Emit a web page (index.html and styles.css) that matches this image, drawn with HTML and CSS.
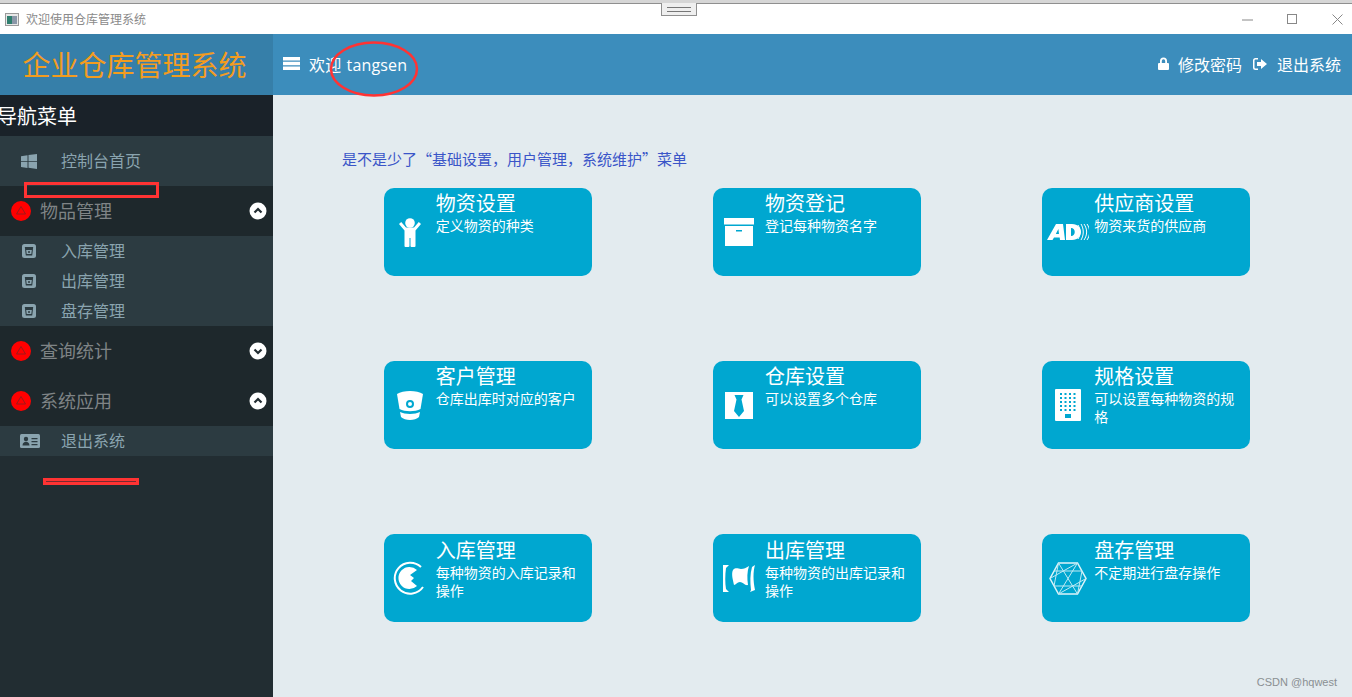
FILE: index.html
```html
<!DOCTYPE html>
<html lang="zh-CN">
<head>
<meta charset="utf-8">
<title>欢迎使用仓库管理系统</title>
<link rel="stylesheet" href="styles.css">
</head>
<body>
<div class="window">
  <div class="topstrip"></div>
  <div class="grip"></div>
  <div class="titlebar">
    <svg class="appicon" width="14" height="13" viewBox="0 0 14 13"><rect x=".5" y=".5" width="13" height="12" fill="#e8e8e8" stroke="#9a9a9a"/><rect x="2" y="3" width="5" height="8" fill="#2f7f6f"/><rect x="7" y="3" width="5" height="8" fill="#8a97a8"/></svg>
    <span class="wintitle">欢迎使用仓库管理系统</span>
    <div class="wincontrols">
      <svg width="11" height="11" viewBox="0 0 11 11"><path d="M0 6h11" stroke="#888" fill="none"/></svg>
      <svg width="11" height="11" viewBox="0 0 11 11"><rect x=".5" y=".5" width="9" height="9" stroke="#888" fill="none"/></svg>
      <svg width="11" height="11" viewBox="0 0 11 11"><path d="M.5.5l10 10M10.500.5l-10 10" stroke="#888" fill="none"/></svg>
    </div>
  </div>
  <div class="app">
    <header class="header">
      <div class="logo">企业仓库管理系统</div>
      <div class="navbar">
        <svg class="burger" width="17" height="13" viewBox="0 0 17 13"><path d="M0 0h17v3.500H0zM0 4.750h17v3.500H0zM0 9.500h17V13H0z" fill="#fff"/></svg>
        <span class="welcome">欢迎 tangsen</span>
        <div class="navlinks">
          <svg width="11" height="13" viewBox="0 0 11 13"><path d="M2 6V4a3.500 3.500 0 0 1 7 0v2h1a1 1 0 0 1 1 1v5a1 1 0 0 1-1 1H1a1 1 0 0 1-1-1V7a1 1 0 0 1 1-1zm1.800 0h3.400V4a1.700 1.700 0 0 0-3.400 0z" fill="#fff"/></svg>
          <a class="navlink">修改密码</a>
          <svg class="signout" width="14" height="12" viewBox="0 0 14 12"><path d="M5 0v1.500H2.500a1 1 0 0 0-1 1v7a1 1 0 0 0 1 1H5V12H2.500A2.500 2.500 0 0 1 0 9.500v-7A2.500 2.500 0 0 1 2.500 0z" fill="#fff"/><path d="M8 1l6 5-6 5V8H4V4h4z" fill="#fff"/></svg>
          <a class="navlink">退出系统</a>
        </div>
      </div>
    </header>
    <div class="body">
      <aside class="sidebar">
        <div class="sidetitle">导航菜单</div>
        <a class="home">
          <svg class="itemicon" width="16" height="15" viewBox="0 0 16 15"><path d="M0 2.200l6.500-1v6H0zM7.500 1L16 0v7.200H7.500zM0 8h6.500v6L0 13zM7.500 8H16v7l-8.500-1.200z" fill="#8aa4af"/></svg>
          <span class="itemlabel">控制台首页</span>
        </a>
        <div class="group">
          <svg class="alert" width="20" height="20" viewBox="0 0 20 20"><circle cx="10" cy="10" r="10" fill="#f00"/><path d="M10 5.500l4.500 7.500h-9z" fill="none" stroke="#9c1a1a" stroke-width="1"/></svg>
          <span class="grouplabel">物品管理</span>
          <svg class="chev" width="18" height="18" viewBox="0 0 18 18"><circle cx="9" cy="9" r="8.500" fill="#fff"/><path d="M5.500 10.500L9 7l3.500 3.500" fill="none" stroke="#222d32" stroke-width="2.200"/></svg>
        </div>
        <ul class="submenu">
          <li class="subitem"><svg class="itemicon" width="14" height="14" viewBox="0 0 14 14"><rect width="14" height="14" rx="2.500" fill="#8aa4af"/><path d="M2.800 3h8.400l-1 8.500H3.800z" fill="#2c3b41"/><path d="M4.200 6h5.600l-.5 4H4.700z" fill="#8aa4af"/><circle cx="7" cy="8" r="1" fill="#2c3b41"/></svg><span class="itemlabel">入库管理</span></li>
          <li class="subitem"><svg class="itemicon" width="14" height="14" viewBox="0 0 14 14"><rect width="14" height="14" rx="2.500" fill="#8aa4af"/><path d="M2.800 3h8.400l-1 8.500H3.800z" fill="#2c3b41"/><path d="M4.200 6h5.600l-.5 4H4.700z" fill="#8aa4af"/><circle cx="7" cy="8" r="1" fill="#2c3b41"/></svg><span class="itemlabel">出库管理</span></li>
          <li class="subitem"><svg class="itemicon" width="14" height="14" viewBox="0 0 14 14"><rect width="14" height="14" rx="2.500" fill="#8aa4af"/><path d="M2.800 3h8.400l-1 8.500H3.800z" fill="#2c3b41"/><path d="M4.200 6h5.600l-.5 4H4.700z" fill="#8aa4af"/><circle cx="7" cy="8" r="1" fill="#2c3b41"/></svg><span class="itemlabel">盘存管理</span></li>
        </ul>
        <div class="group">
          <svg class="alert" width="20" height="20" viewBox="0 0 20 20"><circle cx="10" cy="10" r="10" fill="#f00"/><path d="M10 5.500l4.500 7.500h-9z" fill="none" stroke="#9c1a1a" stroke-width="1"/></svg>
          <span class="grouplabel">查询统计</span>
          <svg class="chev" width="18" height="18" viewBox="0 0 18 18"><circle cx="9" cy="9" r="8.500" fill="#fff"/><path d="M5.500 7.500L9 11l3.500-3.500" fill="none" stroke="#222d32" stroke-width="2.200"/></svg>
        </div>
        <div class="group">
          <svg class="alert" width="20" height="20" viewBox="0 0 20 20"><circle cx="10" cy="10" r="10" fill="#f00"/><path d="M10 5.500l4.500 7.500h-9z" fill="none" stroke="#9c1a1a" stroke-width="1"/></svg>
          <span class="grouplabel">系统应用</span>
          <svg class="chev" width="18" height="18" viewBox="0 0 18 18"><circle cx="9" cy="9" r="8.500" fill="#fff"/><path d="M5.500 10.500L9 7l3.500 3.500" fill="none" stroke="#222d32" stroke-width="2.200"/></svg>
        </div>
        <ul class="submenu">
          <li class="subitem subitem-wide"><svg class="itemicon" width="20" height="14" viewBox="0 0 20 14"><rect width="20" height="14" rx="1.500" fill="#8aa4af"/><circle cx="6" cy="5" r="2.200" fill="#2c3b41"/><path d="M2.500 11.500c0-5 7-5 7 0zM11.500 4h6v1.300h-6zM11.500 7h6v1.300h-6zM11.500 10h6v1.300h-6z" fill="#2c3b41"/></svg><span class="itemlabel">退出系统</span></li>
        </ul>
      </aside>
      <main class="content">
        <p class="note">是不是少了“基础设置，用户管理，系统维护”菜单</p>
        <div class="cards">
          <div class="card">
            <div class="cardicon"><svg width="22" height="29" viewBox="0 0 22 29"><circle cx="11" cy="5" r="4.800" fill="#fff"/><path d="M0 6l2.200-2 4.800 5.500h8L19.800 4 22 6l-5.500 6.500V28a1 1 0 0 1-1 1h-3a1 1 0 0 1-1-1V20h-1v8a1 1 0 0 1-1 1h-3a1 1 0 0 1-1-1V12.500z" fill="#fff"/></svg></div>
            <div class="cardtext"><h3>物资设置</h3><p>定义物资的种类</p></div>
          </div>
          <div class="card">
            <div class="cardicon"><svg width="30" height="28" viewBox="0 0 30 28"><path d="M0 0h30v6.500H0zM1 8h28v20H1z" fill="#fff"/><rect x="12" y="12" width="6" height="1.500" fill="#00a7d0"/></svg></div>
            <div class="cardtext"><h3>物资登记</h3><p>登记每种物资名字</p></div>
          </div>
          <div class="card">
            <div class="cardicon"><svg width="42" height="16" viewBox="0 0 42 16"><path d="M0 16L9 0h7l2 16h-5l-.3-2.500H7L5.500 16zM8.800 10H12l-.6-5zM19 0h6c12 0 12 16 0 16h-6zM24 4v8c5 0 5-8 0-8z" fill="#fff"/><path d="M31 1c2.500 4 2.500 10 0 14M34 0c3 5 3 11 0 16M37 0c3.500 5 3.500 11 0 16M40 0c3.500 5 3.500 11 0 16" stroke="#fff" fill="none" stroke-width="1"/></svg></div>
            <div class="cardtext"><h3>供应商设置</h3><p>物资来货的供应商</p></div>
          </div>
          <div class="card">
            <div class="cardicon"><svg width="26" height="29" viewBox="0 0 26 29"><path d="M0 3C6-1 20-1 26 3l-2.500 15C18 21 8 21 2.500 18z" fill="#fff"/><circle cx="13" cy="13" r="3" fill="#fff" stroke="#00a7d0" stroke-width="2"/><path d="M3 21c5 2.500 15 2.500 20 0l-1 5c-4 4-14 4-18 0z" fill="#fff"/></svg></div>
            <div class="cardtext"><h3>客户管理</h3><p>仓库出库时对应的客户</p></div>
          </div>
          <div class="card">
            <div class="cardicon"><svg width="28" height="27" viewBox="0 0 28 27"><rect width="28" height="27" fill="#fff"/><path d="M9.500 3h9L16.500 7.500 19 19l-5 6-5-6 2.500-11.500z" fill="#00a7d0"/></svg></div>
            <div class="cardtext"><h3>仓库设置</h3><p>可以设置多个仓库</p></div>
          </div>
          <div class="card">
            <div class="cardicon"><svg width="26" height="32" viewBox="0 0 26 32"><rect width="26" height="32" rx="1" fill="#fff"/><path d="M5 5h16M5 9h16M5 13h16M5 17h16M5 21h16" stroke="#00a7d0" stroke-width="2" stroke-dasharray="2 2.500" fill="none"/><rect x="10" y="25" width="6" height="4" fill="#00a7d0"/></svg></div>
            <div class="cardtext"><h3>规格设置</h3><p>可以设置每种物资的规格</p></div>
          </div>
          <div class="card">
            <div class="cardicon"><svg width="33" height="34" viewBox="0 0 33 34"><path d="M28 6A15.500 15.500 0 1 0 30 26" fill="none" stroke="#fff" stroke-width="2"/><path d="M24 9A11 11 0 1 0 24 25l-6-5 3-3-4-3z" fill="#fff"/></svg></div>
            <div class="cardtext"><h3>入库管理</h3><p>每种物资的入库记录和操作</p></div>
          </div>
          <div class="card">
            <div class="cardicon"><svg width="34" height="27" viewBox="0 0 34 27"><path d="M1 0h6L4 3C3 10 3 18 4 24l3 3H1zM33 0c-2 6-2 16 0 25l-5 2 1-2c-1-8-1-16 1-23z" fill="#fff"/><path d="M11 5c3-3 5-1 8-1 3 0 5-1 8-3-2 6-2 12-1 19-3 1-5-3-8-3-3 0-4 3-6 3-1-5-3-11-1-15z" fill="#fff"/></svg></div>
            <div class="cardtext"><h3>出库管理</h3><p>每种物资的出库记录和操作</p></div>
          </div>
          <div class="card">
            <div class="cardicon"><svg width="38" height="33" viewBox="0 0 38 33"><path d="M9.500 1h19L37 16.500 28.500 32h-19L1 16.500z" fill="none" stroke="#dff4f9" stroke-width="1.500"/><path d="M9.500 1L28.500 32M28.500 1L9.500 32M1 16.500L28.500 1M37 16.500L9.500 32M5 9h28M5 24h28M9.500 1L5 24M28.500 32L33 9" fill="none" stroke="#bfeaf4" stroke-width="1"/></svg></div>
            <div class="cardtext"><h3>盘存管理</h3><p>不定期进行盘存操作</p></div>
          </div>
        </div>
      </main>
    </div>
  </div>
  <svg class="mark-ellipse" width="90" height="58" viewBox="0 0 90 58"><ellipse cx="45" cy="29" rx="43" ry="26.500" fill="none" stroke="#f33" stroke-width="2.500"/></svg>
  <div class="mark-box"></div>
  <div class="mark-line"></div>
  <div class="watermark">CSDN @hqwest</div>
</div>
</body>
</html>
```
FILE: styles.css
```css
* { box-sizing: border-box; }
html, body { margin: 0; height: 100%; overflow: hidden; }
body { font-family: "Open Sans", "Noto Sans CJK SC", sans-serif; background: #fff; }
ul { list-style: none; margin: 0; padding: 0; }
p, h3 { margin: 0; font-weight: 400; }

.window { position: relative; width: 1352px; height: 697px; display: flex; flex-direction: column; }
.topstrip { height: 4px; background: #d6d6d6; border-bottom: 1px solid #8f8f8f; }
.grip { position: absolute; left: 661px; top: 3px; width: 36px; height: 13px; background: #efefef; border: 1px solid #8f8f8f; border-top: 0; }
.grip::after { content: ""; position: absolute; left: 5px; right: 5px; top: 4px; height: 3px; border-top: 1px solid #777; border-bottom: 1px solid #777; }

.titlebar { height: 30px; flex: none; display: flex; align-items: center; padding-left: 5px; background: #fff; }
.appicon { margin-right: 7px; }
.wintitle { font-size: 12px; color: #8a8a8a; }
.wincontrols { margin-left: auto; display: flex; gap: 34px; padding-right: 9px; align-items: center; }

.app { flex: 1; display: flex; flex-direction: column; min-height: 0; }
.header { height: 61px; flex: none; display: flex; }
.logo { width: 273px; background: #367fa9; color: #f39c1f; font-size: 28px; line-height: 63px; padding-right: 4px; text-align: center; }
.navbar { flex: 1; background: #3c8dbc; display: flex; align-items: center; padding: 0 11px 2px 10px; color: #fff; font-size: 16px; }
.burger { margin-right: 9px; }
.welcome { white-space: pre; word-spacing: 1px; letter-spacing: .15px; }
.navlinks { margin-left: auto; display: flex; align-items: center; }
.navlink { margin-left: 9px; }
.signout { margin-left: 11px; }
.signout + .navlink { margin-left: 10px; }

.body { flex: 1; display: flex; min-height: 0; }
.sidebar { width: 273px; flex: none; background: #222d32; overflow: hidden; }
.sidetitle { height: 41px; background: #1a2229; color: #fff; font-size: 20px; line-height: 43px; margin-left: -3px; box-shadow: -3px 0 0 #1a2229; }
.home { height: 50px; background: #2c3b41; display: flex; align-items: center; padding-left: 21px; color: #8aa4af; font-size: 16px; }
.home .itemicon { margin-right: 24px; }
.itemlabel { position: relative; top: -1px; }
.group { height: 50px; background: #1e282c; display: flex; align-items: center; padding: 0 6px 0 11px; }
.grouplabel { margin-left: 9px; font-size: 18px; color: #7f8486; position: relative; top: -1px; }
.chev { margin-left: auto; }
.submenu { background: #2c3b41; }
.subitem { height: 30px; display: flex; align-items: center; padding-left: 22px; color: #8aa4af; font-size: 16px; }
.subitem .itemicon { margin-right: 25px; }
.subitem-wide { padding-left: 20px; }
.subitem-wide .itemicon { margin-right: 21px; }

.content { flex: 1; background: #e3ebef; padding: 54px 102px 0 69px; }
.note { font-size: 15px; line-height: 20px; color: #3a55c8; font-family: "Noto Sans CJK SC", sans-serif; }
.cards { display: grid; grid-template-columns: repeat(3, 208px); column-gap: 121.3px; row-gap: 85px; margin: 19px 0 0 41.7px; }
.card { height: 88px; background: #00a7d0; border-radius: 10px; display: flex; color: #fff; }
.card:nth-child(n+7) .cardtext { padding-top: 1px; }
.cardicon { width: 52px; flex: none; display: flex; justify-content: center; align-items: center; }
.cardtext { flex: 1; padding-right: 14px; }
.cardtext h3 { font-size: 20px; line-height: 29px; padding-top: 1px; margin-bottom: -1px; }
.cardtext p { font-size: 14px; line-height: 18px; }

.mark-ellipse { position: absolute; left: 329px; top: 40px; }
.mark-box { position: absolute; left: 24px; top: 182px; width: 135px; height: 16px; border: 3px solid #f33; }
.mark-line { position: absolute; left: 43px; top: 478px; width: 96px; height: 7px; border: 3px solid #f33; background: #7a2a30; }
.watermark { position: absolute; right: 15px; top: 676px; font: 11px "Liberation Sans", sans-serif; color: #8a8f92; }
```
